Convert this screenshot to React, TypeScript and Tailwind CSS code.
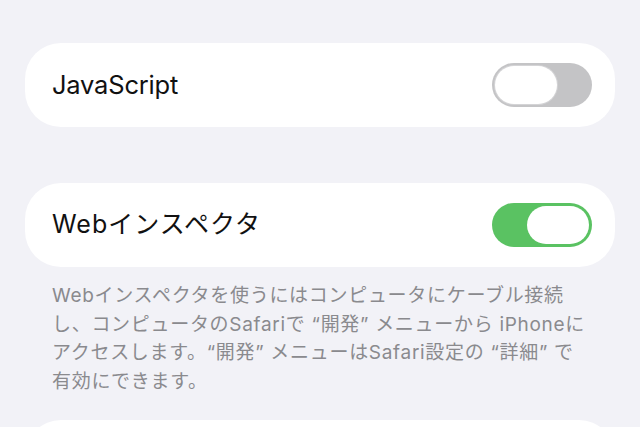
import React from "react";

function Toggle({ on }: { on: boolean }) {
  return (
    <div
      className={`flex h-[44px] w-[100px] items-center rounded-full p-[3px] ${
        on ? "justify-end bg-[#5ac262]" : "justify-start bg-[#c4c4c6]"
      }`}
    >
      <div
        className={`h-[38px] w-[62px] rounded-full bg-white ${
          on ? "" : "shadow-[0_0_0_1px_#d4d4d6]"
        }`}
      />
    </div>
  );
}

export default function App() {
  const font = {
    fontFamily: '"Inter", "Noto Sans CJK JP", sans-serif',
  };
  return (
    <div
      className="flex h-[427px] w-[640px] flex-col overflow-hidden bg-[#f2f2f7] px-[25px] pt-[43px]"
      style={font}
    >
      <div className="flex h-[84px] shrink-0 items-center justify-between rounded-[36px] bg-white pl-[27px] pr-[23px]">
        <span className="text-[25.5px] tracking-[-0.2px] text-[#111]">JavaScript</span>
        <Toggle on={false} />
      </div>
      <div className="mt-[56px] flex h-[84px] shrink-0 items-center justify-between rounded-[36px] bg-white pl-[27px] pr-[23px]">
        <span className="text-[25px] tracking-[1px] text-[#111]">Webインスペクタ</span>
        <Toggle on={true} />
      </div>
      <div className="mt-[15px] pl-[27px] text-[19px] leading-[28.5px] tracking-[0.7px] text-[#8a8a8e]">
        <div className="whitespace-nowrap">Webインスペクタを使うにはコンピュータにケーブル接続</div>
        <div className="whitespace-nowrap">し、コンピュータのSafariで “開発” メニューから iPhoneに</div>
        <div className="whitespace-nowrap">アクセスします。“開発” メニューはSafari設定の “詳細” で</div>
        <div className="whitespace-nowrap">有効にできます。</div>
      </div>
      <div className="mt-[24px] h-[84px] shrink-0 rounded-[36px] bg-white" />
    </div>
  );
}
